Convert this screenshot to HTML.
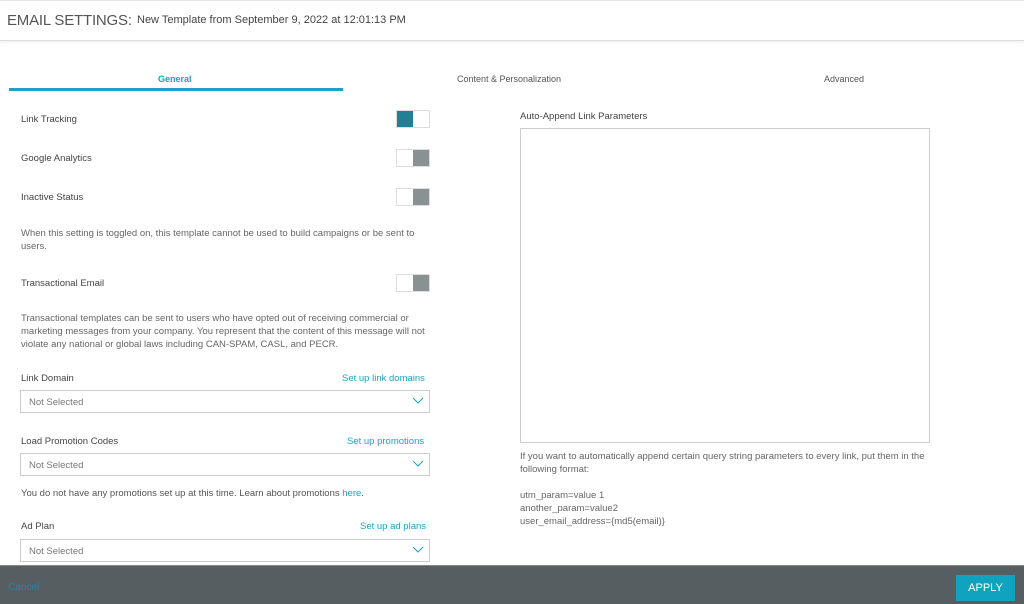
<!DOCTYPE html>
<html><head><meta charset="utf-8"><style>
*{margin:0;padding:0;box-sizing:border-box}
body{width:1024px;height:604px;overflow:hidden;background:#fff;font-family:"Liberation Sans",sans-serif;color:#444;position:relative}
.hdr{position:absolute;left:0;top:0;width:1024px;height:41px;border-top:1px solid #e6e6e6;border-bottom:1px solid #ddd;box-shadow:0 1px 3px rgba(0,0,0,.08)}
.hdr .t{position:absolute;left:7px;top:11px;font-size:15px;color:#555;letter-spacing:-0.2px}
.hdr .s{position:absolute;left:137px;top:13px;font-size:11px;color:#444}
.abs{position:absolute}
.tab{position:absolute;top:74px;font-size:9px;color:#555}
.lbl{position:absolute;left:21px;font-size:9.5px;color:#444}
.txt{position:absolute;left:21px;font-size:9.5px;color:#666;line-height:13px;width:412px}
.tg{position:absolute;left:396px;width:34px;height:18px;border:1px solid #ddd;display:flex}
.tg i{flex:1;display:block}
.link{position:absolute;font-size:9.5px;color:#1aa3c4}
.sel{position:absolute;left:20px;width:410px;height:23px;border:1px solid #ccc;font-size:9.5px;color:#777;padding:6px 8px}
.sel svg{position:absolute;right:5px;top:6px}
</style></head><body>
<div class="hdr"><div class="t">EMAIL SETTINGS:</div><div class="s">New Template from September 9, 2022 at 12:01:13 PM</div></div>
<div class="tab" style="left:158px;color:#1aa3c4;font-weight:bold">General</div>
<div class="abs" style="left:9px;top:88px;width:334px;height:3px;background:#1aa3c4"></div>
<div class="tab" style="left:457px">Content &amp; Personalization</div>
<div class="tab" style="left:824px">Advanced</div>

<div class="lbl" style="top:114px">Link Tracking</div>
<div class="tg" style="top:110px"><i style="background:#237f93"></i><i style="background:#fff"></i></div>
<div class="lbl" style="top:153px">Google Analytics</div>
<div class="tg" style="top:149px"><i style="background:#fff"></i><i style="background:#8a9193"></i></div>
<div class="lbl" style="top:192px">Inactive Status</div>
<div class="tg" style="top:188px"><i style="background:#fff"></i><i style="background:#8a9193"></i></div>
<div class="txt" style="top:227px">When this setting is toggled on, this template cannot be used to build campaigns or be sent to users.</div>
<div class="lbl" style="top:278px">Transactional Email</div>
<div class="tg" style="top:274px"><i style="background:#fff"></i><i style="background:#8a9193"></i></div>
<div class="txt" style="top:312px">Transactional templates can be sent to users who have opted out of receiving commercial or marketing messages from your company. You represent that the content of this message will not violate any national or global laws including CAN-SPAM, CASL, and PECR.</div>
<div class="lbl" style="top:373px">Link Domain</div>
<div class="link" style="top:373px;left:342px">Set up link domains</div>
<div class="sel" style="top:390px">Not Selected<svg width="12" height="8"><path d="M1 1l5 5 5-5" stroke="#1aa3c4" fill="none"/></svg></div>
<div class="lbl" style="top:436px">Load Promotion Codes</div>
<div class="link" style="top:436px;left:347px">Set up promotions</div>
<div class="sel" style="top:453px">Not Selected<svg width="12" height="8"><path d="M1 1l5 5 5-5" stroke="#1aa3c4" fill="none"/></svg></div>
<div class="txt" style="top:487px;color:#555;width:440px">You do not have any promotions set up at this time. Learn about promotions <span style="color:#1aa3c4">here</span>.</div>
<div class="lbl" style="top:521px">Ad Plan</div>
<div class="link" style="top:521px;left:360px">Set up ad plans</div>
<div class="sel" style="top:539px">Not Selected<svg width="12" height="8"><path d="M1 1l5 5 5-5" stroke="#1aa3c4" fill="none"/></svg></div>

<div class="abs" style="left:520px;top:111px;font-size:9.5px;color:#444">Auto-Append Link Parameters</div>
<div class="abs" style="left:520px;top:128px;width:410px;height:315px;border:1px solid #ccc"></div>
<div class="abs" style="left:520px;top:450px;font-size:9.5px;color:#666;line-height:13px;width:420px">If you want to automatically append certain query string parameters to every link, put them in the following format:<br><br>utm_param=value 1<br>another_param=value2<br>user_email_address={md5(email)}</div>

<div class="abs" style="left:0;top:565px;width:1024px;height:39px;background:#575e61;border-top:1px solid #888"></div>
<div class="abs" style="left:8px;top:582px;font-size:10px;color:#1a8aa5">Cancel</div>
<div class="abs" style="left:956px;top:575px;width:59px;height:26px;background:#0fa3c0;color:#fff;font-size:11px;text-align:center;line-height:26px">APPLY</div>
</body></html>
